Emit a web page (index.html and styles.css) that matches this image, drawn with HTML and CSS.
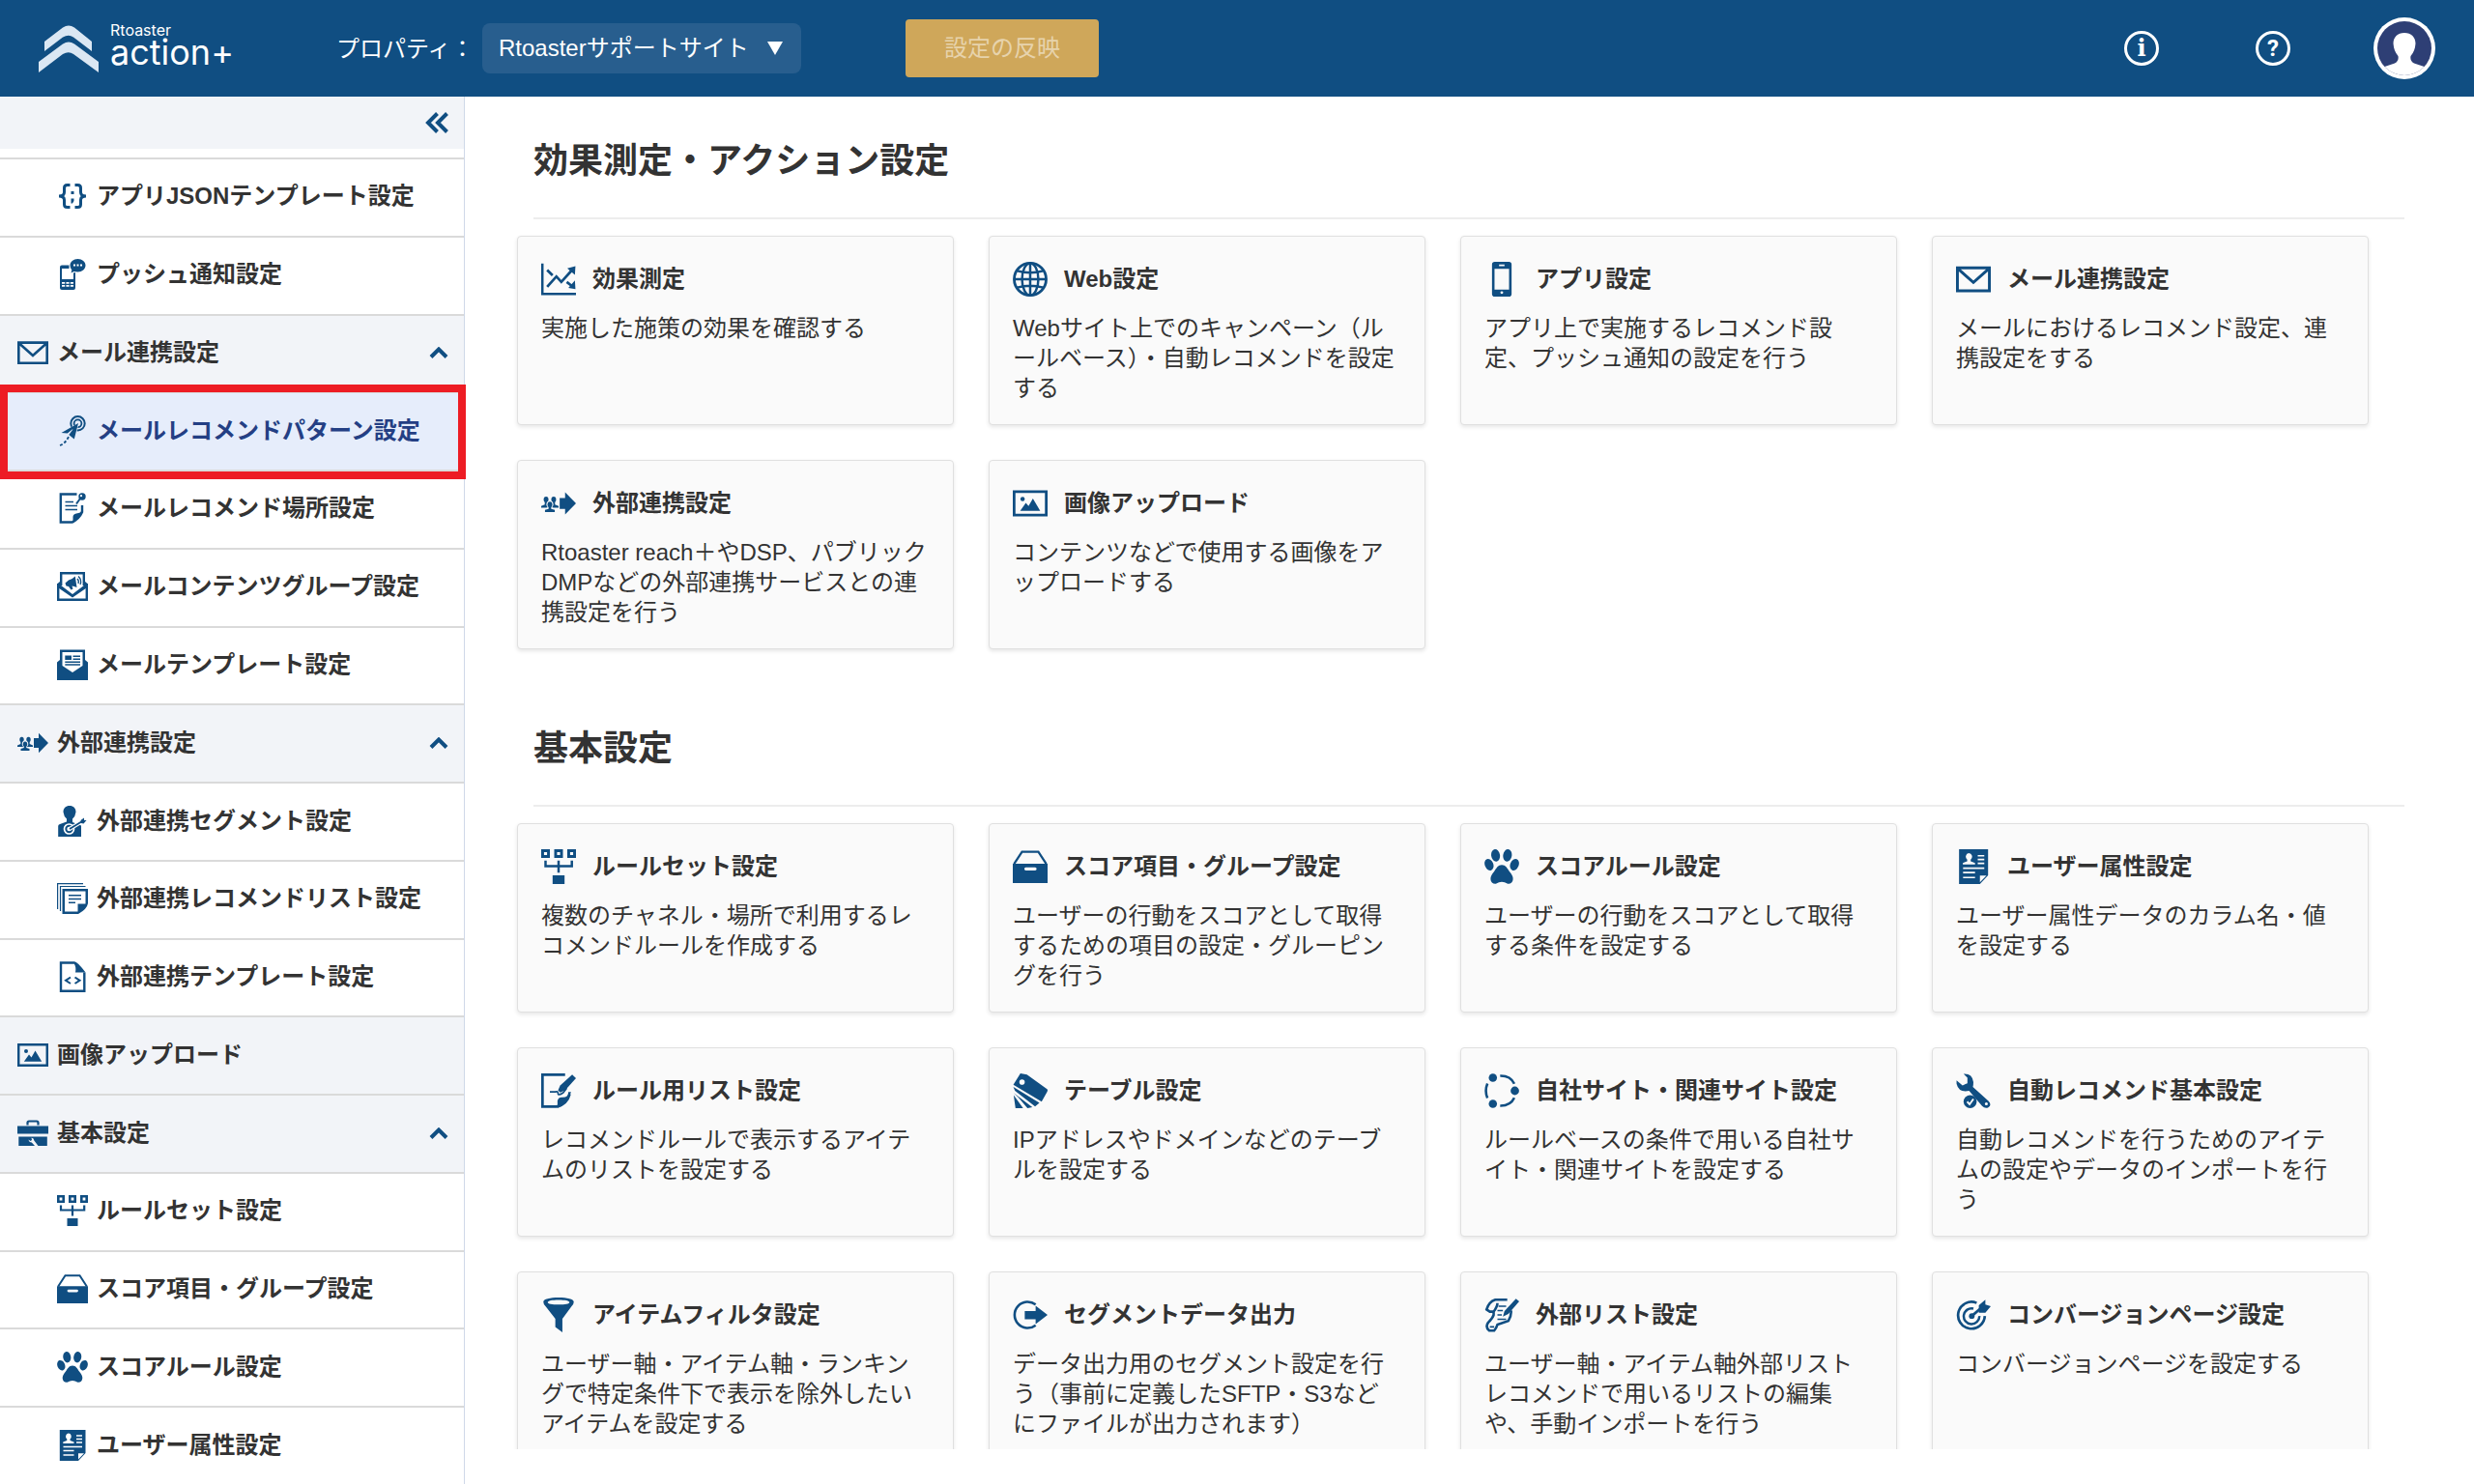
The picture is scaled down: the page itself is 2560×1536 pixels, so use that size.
FILE: index.html
```html
<!DOCTYPE html>
<html lang="ja">
<head>
    <meta charset="UTF-8">
    <meta name="viewport" content="width=device-width, initial-scale=1.0">
    <title>Rtoaster action+</title>
    <link rel="stylesheet" href="styles.css">
</head>
<body>

<!-- Icon sprite -->
<svg class="sprite" aria-hidden="true">
    <symbol id="i-json" viewBox="0 0 32 32">
        <g class="line" stroke-width="3">
            <path d="M13.500 4.500H10.500Q7.500 4.500 7.500 7.500V12Q7.500 16 2 16Q7.500 16 7.500 20V24.500Q7.500 27.500 10.500 27.500H13.500"/>
            <path d="M18.500 4.500H21.500Q24.500 4.500 24.500 7.500V12Q24.500 16 30 16Q24.500 16 24.500 20V24.500Q24.500 27.500 21.500 27.500H18.500"/>
        </g>
        <path d="M14.500 11h3v3h-3zM14.500 18.500h3v2.500l-1.500 2.500h-1.500z"/>
    </symbol>
    <symbol id="i-push" viewBox="0 0 32 32">
        <path fill-rule="evenodd" d="M5 6.500H12.500V10H5V21H17V14.500L19 14V30Q19 32 17 32H5Q3 32 3 30V8.500Q3 6.500 5 6.500zM5 24v1.800h3.200V24zM9.400 24v1.800h3.200V24zM13.800 24v1.800H17V24zM5 27v1.800h3.200V27zM9.400 27v1.800h3.200V27zM13.800 27v1.800H17V27z"/>
        <path d="M21.500 0C26 0 29.500 3 29.500 6.700S26 13.400 21.500 13.400Q19 13.400 17.500 13L14.500 14.600L15.300 11.500Q13.500 9.500 13.500 6.700C13.500 3 17 0 21.500 0z"/>
        <path class="cut" d="M17 5.600h2v2h-2zM20.500 5.600h2v2h-2zM24 5.600h2v2h-2z"/>
    </symbol>
    <symbol id="i-mail" viewBox="0 0 32 32">
        <path class="line" stroke-width="2.600" d="M1.300 5.600H30.700V26.700H1.300zM2 6.500L16 19L30 6.500"/>
    </symbol>
    <symbol id="i-pattern" viewBox="0 0 32 32">
        <circle class="line" stroke-width="2" cx="21.500" cy="8.300" r="7.200"/>
        <circle class="line" stroke-width="1.800" cx="21.500" cy="8.300" r="3.900"/>
        <path class="cutline" stroke-width="1" d="M22 8.500L4.500 18L11.500 18.800L17.800 24.500z"/>
        <path d="M22 8L4.500 18L10.800 18.600L17.500 13L12.300 20L17.800 24.500z"/>
        <path class="line" stroke-width="1.800" stroke-dasharray="3 2" d="M3 31Q9 29 12.500 21"/>
    </symbol>
    <symbol id="i-place" viewBox="0 0 32 32">
        <path class="line" stroke-width="2.400" d="M20.500 1.500H3.800V30.500H15.500Q23 27 26 20V13"/>
        <path d="M27.200 19L16.500 32V25Q16.500 22 20 21.500Q25 21 25.500 18z"/>
        <circle cx="26" cy="4" r="3.700"/>
        <circle class="cut" cx="25" cy="3.200" r="1.100"/>
        <path class="line" stroke-width="2" d="M24 6L20 11.500"/>
        <path class="line" stroke-width="1.400" d="M8.500 9.500H17M8.500 13.500H21M8.500 17.500H21"/>
    </symbol>
    <symbol id="i-contents" viewBox="0 0 32 32">
        <path class="line" stroke-width="2.400" d="M1.200 13V29.700H30.800V13"/>
        <path d="M0 13.500L3.500 10.500V14.500L16 24L28.500 14.500V10.500L32 13.500V16.500L16 27.500L0 16.500z"/>
        <path class="line" stroke-width="2.400" d="M4.200 15V2.200H27.800V15"/>
        <path d="M8.500 12.500L12 9.500Q16 8.500 18.800 5.500L20.500 17Q17.500 15.500 15.500 15.500L16.500 18.500L14.500 19.500L12 16L9.500 15.500z"/>
        <path class="line" stroke-width="1.300" d="M21 8Q23 10 22 13M22 5.500Q26 9 24 14"/>
    </symbol>
    <symbol id="i-mailtemplate" viewBox="0 0 32 32">
        <path d="M3 .500H29V11L32 13.500V32H0V13.500L3 11z"/>
        <path class="cut" d="M5.500 3H26.500V17L16 24L5.500 17z"/>
        <path d="M8.300 6.500H15V11H8.300z"/>
        <path class="line" stroke-width="1.500" d="M16.500 7.300H24M16.500 10.300H24M8.300 13.300H24M8.300 16H24"/>
    </symbol>
    <symbol id="i-external" viewBox="0 0 32 32">
        <path d="M17 11H22V5.800L32 16L22 26.300V21H17z"/>
        <ellipse cx="4.500" cy="12.500" rx="2.200" ry="2.700"/>
        <ellipse cx="11.500" cy="12.500" rx="2.200" ry="2.700"/>
        <path d="M3.300 14.500H5.700V17L7 18L6 20H0V18.500L3.300 17zM12.700 14.500H10.300V17L9 18L10 20H16V18.500L12.700 17z"/>
        <path class="cut" d="M8 13.500a3.200 3.500 0 0 1 2 6.300l3 1.400v1H3v-1l3-1.400a3.200 3.500 0 0 1 2-6.300z"/>
        <ellipse cx="8" cy="17.200" rx="2.200" ry="2.700"/>
        <path d="M6.800 19H9.200V21L12.500 22V24H3.500V22L6.800 21z"/>
    </symbol>
    <symbol id="i-segment" viewBox="0 0 32 32">
        <path d="M13 0C17 0 19.500 2.500 19.500 6.500Q19 11 16 13.500V17L25 20.500V32H1.200V21Q1.200 19.500 3 19L10 16.500V13.500Q7 11 6.500 6.500C6.500 2.500 9 0 13 0z"/>
        <circle class="cutline" stroke-width="1.700" cx="12.500" cy="24" r="5"/>
        <circle class="cut" cx="12.500" cy="24" r="2.200"/>
        <path class="cutline" stroke-width="4" d="M13 24L27 15.500"/>
        <path class="line" stroke-width="1.800" d="M13 24L27 15.500"/>
        <path d="M24.500 15L28 12.500V15H30.500L27.500 18.500L25 18z"/>
    </symbol>
    <symbol id="i-reclist" viewBox="0 0 32 32">
        <path class="line" stroke-width="1.200" d="M.600 27V.600H27M3.500 29V3.500H29.500"/>
        <path d="M5.500 6H32V21Q31 27 22 32H5.500z"/>
        <path class="cut" d="M8 8.500H29.500V21.500H21.500V29.500H8z"/>
        <path class="line" stroke-width="1.500" d="M12 12.700H25M12 16.500H25M12 20.300H19"/>
    </symbol>
    <symbol id="i-exttemplate" viewBox="0 0 32 32">
        <path class="line" stroke-width="2.400" d="M18 1.500H4V30.700H28.300V11.500"/>
        <path d="M18 .300Q21 .300 29.500 11.500H19Q20 6 18 3z"/>
        <path class="line" stroke-width="2" d="M14 16.500L9 19.800L14 23M18.500 16.500L23.500 19.800L18.500 23"/>
    </symbol>
    <symbol id="i-image" viewBox="0 0 32 32">
        <path class="line" stroke-width="2.500" d="M1.200 5.300H30.800V26.800H1.200z"/>
        <circle cx="9" cy="12" r="2"/>
        <path d="M6.800 22.800L12 15.500L14.500 18.500L18.500 11.500L25.200 22.800z"/>
    </symbol>
    <symbol id="i-basic" viewBox="0 0 32 32">
        <path class="line" stroke-width="2.200" d="M10.500 7.500V5Q10.500 3.500 12 3.500H20Q21.500 3.500 21.500 5V7.500"/>
        <path d="M0 8.500H32V16.500H0zM1.300 19.500H30.800V29H1.300z"/>
        <path class="cut" d="M14.500 20.800Q17 20.500 17.300 23.500L21.500 29H18L14.800 25.500Q12 25.500 11.500 22.500L13.500 24L15 23z"/>
    </symbol>
    <symbol id="i-ruleset" viewBox="0 0 32 32">
        <path class="line" stroke-width="2.600" d="M1.300 1.300H6.700V6.700H1.300zM13.300 1.300H18.700V6.700H13.300zM25.300 1.300H30.700V6.700H25.300z"/>
        <path class="line" stroke-width="2.200" d="M4 10.500V15.500H28.200V10.500M16 10.500V21.500"/>
        <path d="M10.500 24H21.500V32H10.500z"/>
    </symbol>
    <symbol id="i-score" viewBox="0 0 32 32">
        <path class="line" stroke-width="2" d="M1.200 13.500L8.500 2.300H23.500L30.800 13.500"/>
        <path fill-rule="evenodd" d="M0 13.300H32V31H0zM12 16.700a1.300 1.300 0 0 0 0 2.800h8.500a1.300 1.300 0 0 0 0-2.800z"/>
    </symbol>
    <symbol id="i-paw" viewBox="0 0 32 32">
        <ellipse cx="10.300" cy="5.700" rx="4" ry="5.700" transform="rotate(-8 10.300 5.700)"/>
        <ellipse cx="21.200" cy="5.700" rx="4" ry="5.700" transform="rotate(8 21.200 5.700)"/>
        <ellipse cx="4.300" cy="14.200" rx="3.900" ry="5.500" transform="rotate(-22 4.300 14.200)"/>
        <ellipse cx="27.700" cy="14.200" rx="3.900" ry="5.500" transform="rotate(22 27.700 14.200)"/>
        <path d="M16 14.500C19.500 14.500 21 17.500 23 20.500Q26.500 24.500 26.300 27.500C26.200 30.500 24 32 21.500 31.700Q18.500 30 16 30T10.500 31.700C8 32 5.800 30.500 5.700 27.500Q5.500 24.500 9 20.500C11 17.500 12.500 14.500 16 14.500z"/>
    </symbol>
    <symbol id="i-user" viewBox="0 0 32 32">
        <path d="M2.800 0H29.500V24L22 32H2.800z"/>
        <path class="cut" d="M11.800 3.500a3 3.300 0 0 1 1.700 6V11l4 1.600V14H6.300v-1.400l4-1.600V9.500a3 3.300 0 0 1 1.500-6zM28 24.300L22 30.500V24.300z"/>
        <path class="cutline" stroke-width="1.500" d="M20 6H26M20 9.500H26M20 13H26M6.500 17.500H26M6.500 21.500H17.500M6.500 26H17.500"/>
    </symbol>
    <symbol id="i-chart" viewBox="0 0 32 32">
        <path class="line" stroke-width="2.200" d="M1.100 1.500V29.500H32"/>
        <path class="line" stroke-width="2.400" d="M5.500 23L14 13.500L18.500 18.500L28 8M5.500 7.500L10.500 12.500M23.500 18.500L28 22"/>
        <path d="M31.500 4L31 12L24 6zM31.500 25L31 17L25 24z"/>
    </symbol>
    <symbol id="i-web" viewBox="0 0 32 32">
        <circle class="line" stroke-width="2.500" cx="16" cy="16" r="14.700"/>
        <ellipse class="line" stroke-width="2.200" cx="16" cy="16" rx="7.500" ry="14.700"/>
        <path class="line" stroke-width="2.200" d="M16 1V31M1 16H31M4 8.300Q16 11.500 28 8.300M4 23.700Q16 20.500 28 23.700"/>
    </symbol>
    <symbol id="i-app" viewBox="0 0 32 32">
        <path fill-rule="evenodd" d="M9.500 0H22.500Q25 0 25 2.500V29.500Q25 32 22.500 32H9.500Q7 32 7 29.500V2.500Q7 0 9.500 0zM9.300 6.500V25.500H22.700V6.500zM13.500 2.500V4H18.500V2.500zM14.700 28.300a1.300 1.300 0 0 0 2.600 0a1.300 1.300 0 0 0-2.600 0z"/>
    </symbol>
    <symbol id="i-rulelist" viewBox="0 0 32 32">
        <path class="line" stroke-width="2.400" d="M22 1.200H1.200V30.500H14.500Q24 28 26.200 19"/>
        <path d="M27.500 17L25.500 22Q22 30 15 32V25Q16 21.500 20 22Q25 22 25 17z"/>
        <path d="M28.500 1L32 4.500L22 15.500L17.500 17.500L15.500 15.500L17.500 11z"/>
        <path class="line" stroke-width="1.500" d="M8 17H13Q15.500 16 15.500 18.500T20.500 17.500L23.500 13.500"/>
    </symbol>
    <symbol id="i-table" viewBox="0 0 32 32">
        <path fill-rule="evenodd" d="M7 0L13 1L31.500 14.500Q32.500 15.500 31.500 17L26.500 26L.500 10.500zM6 8a2.500 2.500 0 1 0 5 0a2.500 2.500 0 1 0-5 0z"/>
        <path d="M.500 12.500L24.500 27L20.500 30.500L2 16zM.800 18L18 31L13.500 32L5 22zM.800 20L9.500 32H2.500z"/>
    </symbol>
    <symbol id="i-site" viewBox="0 0 32 32">
        <circle cx="7.800" cy="4" r="3.800"/>
        <circle cx="28" cy="16" r="3.900"/>
        <circle cx="7.800" cy="28" r="3.800"/>
        <path class="line" stroke-width="2.300" d="M14.500 2.200Q24 2 27.500 9.500M14.500 29.800Q24 30 27.500 22.500M2.800 9.300Q0 16 2.800 22.700"/>
    </symbol>
    <symbol id="i-auto" viewBox="0 0 32 32">
        <path fill-rule="evenodd" d="M7 .500Q15 0 16 8Q16 10.500 15.500 12.500L30 25.500Q33 29 30 31Q27 33 24 30L12 16Q2.500 18 .500 9.500V6.500L6 11L10.500 9L10.500 4zM26.500 28a1.400 1.400 0 1 0 2.800 0a1.400 1.400 0 1 0-2.800 0z"/>
        <circle cx="13" cy="26" r="6"/>
        <path class="cutline" stroke-width="1.700" d="M10.300 26L12.500 28.500L16 23.500"/>
    </symbol>
    <symbol id="i-filter" viewBox="0 0 32 32">
        <path d="M2 4C2 1.500 8 0 16 0S30 1.500 30 4Q30 6 28 8L19.500 19.500V32L13 27V19.500L4 8Q2 6 2 4z"/>
        <path class="cut" d="M6 4.500C6 3 10 2.300 16 2.300S26 3 26 4.500S22 6.500 16 6.500S6 6 6 4.500z"/>
    </symbol>
    <symbol id="i-output" viewBox="0 0 32 32">
        <path class="line" stroke-width="2.300" d="M21 6.500A12 12 0 1 0 21 25.500"/>
        <path d="M11 12.500H21V7.500L32 16L21 24.500V20H11z"/>
    </symbol>
    <symbol id="i-extlist" viewBox="0 0 32 32">
        <path class="line" stroke-width="2.300" d="M21 2H10Q4 4 2 11L5 13H8.500V16Q7.500 19 3.500 23Q.500 27 4.500 30.500H9Q11 28 12 25L22 21.500Q25 17 24.500 12M8.500 13Q12 8 12 5"/>
        <path d="M29 1L32 3.500L22 15L17 17.500L18.500 12.500z"/>
        <path class="line" stroke-width="1.500" d="M13 8H20M12 12H17M12 16H16M12 20H20M5 27H9"/>
    </symbol>
    <symbol id="i-conversion" viewBox="0 0 32 32">
        <path class="line" stroke-width="2.400" d="M19 5A12.300 12.300 0 1 0 26.500 17"/>
        <path class="line" stroke-width="2.200" d="M16 10.200A7.200 7.200 0 1 0 21.500 17"/>
        <circle cx="14.500" cy="17" r="2.600"/>
        <path class="line" stroke-width="2.400" d="M14.500 17L25 8"/>
        <path d="M21 7L27 2V6.500L32 8L27 14H21z"/>
    </symbol>
</svg>

<header class="header">
    <a class="logo" href="#" aria-label="Rtoaster action+">
        <svg class="logo-mark" viewBox="0 0 62 49">
            <path d="M6 17L25 2.500Q31 -1.500 37 2.500L55 17V27L36 12.500Q31 9 25 12.500L6 27z"/>
            <path d="M0 38L25 19.500Q31 15.500 37 19.500L62 38V49L36 30Q31 26.500 25 30L0 49z"/>
        </svg>
        <span class="logo-text">
            <span class="logo-small">Rtoaster</span>
            <span class="logo-large">action+</span>
        </span>
    </a>
    <label class="property-label" for="property">プロパティ：</label>
    <select class="property-select" id="property">
        <option>Rtoasterサポートサイト</option>
    </select>
    <button class="apply-btn" type="button">設定の反映</button>
    <div class="header-icons">
        <button class="icon-btn" type="button" aria-label="Info">
            <svg viewBox="0 0 38 38"><circle cx="19" cy="19" r="16.500"/><text class="slab" x="19" y="27">i</text></svg>
        </button>
        <button class="icon-btn" type="button" aria-label="Help">
            <svg viewBox="0 0 38 38"><circle cx="19" cy="19" r="16.500"/><text x="19" y="27">?</text></svg>
        </button>
        <button class="avatar" type="button" aria-label="Account">
            <svg viewBox="0 0 64 64">
                <circle class="ring" cx="32" cy="32" r="32"/>
                <circle class="back" cx="32" cy="32" r="28"/>
                <path class="ring" d="M32 16C39 16 43.500 20.500 43.500 27Q43 35 38.500 40Q37.500 45 42 47.500L52.500 51A28 28 0 0 1 11.500 51L22 47.500Q26.500 45 25.500 40Q21 35 20.500 27C20.500 20.500 25 16 32 16z"/>
            </svg>
        </button>
    </div>
</header>

<div class="layout">
    <aside class="sidebar">
        <div class="sidebar-top">
            <button class="collapse-btn" type="button" aria-label="Collapse">
                <svg viewBox="0 0 24 22"><path d="M12.500 1.500L3 11L12.500 20.500M22.500 1.500L13 11L22.500 20.500"/></svg>
            </button>
        </div>
        <nav class="menu">
            <a class="menu-item" href="#"><svg class="icon"><use href="#i-json"/></svg>アプリJSONテンプレート設定</a>
            <a class="menu-item" href="#"><svg class="icon"><use href="#i-push"/></svg>プッシュ通知設定</a>
            <a class="menu-item group" href="#"><svg class="icon"><use href="#i-mail"/></svg>メール連携設定<svg class="chevron" viewBox="0 0 20 12"><path d="M2 10.500L10 2.500L18 10.500"/></svg></a>
            <a class="menu-item active" href="#"><svg class="icon"><use href="#i-pattern"/></svg>メールレコメンドパターン設定</a>
            <a class="menu-item" href="#"><svg class="icon"><use href="#i-place"/></svg>メールレコメンド場所設定</a>
            <a class="menu-item" href="#"><svg class="icon"><use href="#i-contents"/></svg>メールコンテンツグループ設定</a>
            <a class="menu-item" href="#"><svg class="icon"><use href="#i-mailtemplate"/></svg>メールテンプレート設定</a>
            <a class="menu-item group" href="#"><svg class="icon"><use href="#i-external"/></svg>外部連携設定<svg class="chevron" viewBox="0 0 20 12"><path d="M2 10.500L10 2.500L18 10.500"/></svg></a>
            <a class="menu-item" href="#"><svg class="icon"><use href="#i-segment"/></svg>外部連携セグメント設定</a>
            <a class="menu-item" href="#"><svg class="icon"><use href="#i-reclist"/></svg>外部連携レコメンドリスト設定</a>
            <a class="menu-item" href="#"><svg class="icon"><use href="#i-exttemplate"/></svg>外部連携テンプレート設定</a>
            <a class="menu-item group" href="#"><svg class="icon"><use href="#i-image"/></svg>画像アップロード</a>
            <a class="menu-item group" href="#"><svg class="icon"><use href="#i-basic"/></svg>基本設定<svg class="chevron" viewBox="0 0 20 12"><path d="M2 10.500L10 2.500L18 10.500"/></svg></a>
            <a class="menu-item" href="#"><svg class="icon"><use href="#i-ruleset"/></svg>ルールセット設定</a>
            <a class="menu-item" href="#"><svg class="icon"><use href="#i-score"/></svg>スコア項目・グループ設定</a>
            <a class="menu-item" href="#"><svg class="icon"><use href="#i-paw"/></svg>スコアルール設定</a>
            <a class="menu-item" href="#"><svg class="icon"><use href="#i-user"/></svg>ユーザー属性設定</a>
        </nav>
    </aside>

    <main class="main">
        <section class="section">
            <h2>効果測定・アクション設定</h2>
            <div class="cards">
                <a class="card" href="#">
                    <h3><svg class="icon"><use href="#i-chart"/></svg>効果測定</h3>
                    <p>実施した施策の効果を確認する</p>
                </a>
                <a class="card" href="#">
                    <h3><svg class="icon"><use href="#i-web"/></svg>Web設定</h3>
                    <p>Webサイト上でのキャンペーン（ルールベース）・自動レコメンドを設定する</p>
                </a>
                <a class="card" href="#">
                    <h3><svg class="icon"><use href="#i-app"/></svg>アプリ設定</h3>
                    <p>アプリ上で実施するレコメンド設定、プッシュ通知の設定を行う</p>
                </a>
                <a class="card" href="#">
                    <h3><svg class="icon"><use href="#i-mail"/></svg>メール連携設定</h3>
                    <p>メールにおけるレコメンド設定、連携設定をする</p>
                </a>
                <a class="card" href="#">
                    <h3><svg class="icon"><use href="#i-external"/></svg>外部連携設定</h3>
                    <p>Rtoaster reach＋やDSP、パブリックDMPなどの外部連携サービスとの連携設定を行う</p>
                </a>
                <a class="card" href="#">
                    <h3><svg class="icon"><use href="#i-image"/></svg>画像アップロード</h3>
                    <p>コンテンツなどで使用する画像をアップロードする</p>
                </a>
            </div>
        </section>

        <section class="section">
            <h2>基本設定</h2>
            <div class="cards">
                <a class="card" href="#">
                    <h3><svg class="icon"><use href="#i-ruleset"/></svg>ルールセット設定</h3>
                    <p>複数のチャネル・場所で利用するレコメンドルールを作成する</p>
                </a>
                <a class="card" href="#">
                    <h3><svg class="icon"><use href="#i-score"/></svg>スコア項目・グループ設定</h3>
                    <p>ユーザーの行動をスコアとして取得するための項目の設定・グルーピングを行う</p>
                </a>
                <a class="card" href="#">
                    <h3><svg class="icon"><use href="#i-paw"/></svg>スコアルール設定</h3>
                    <p>ユーザーの行動をスコアとして取得する条件を設定する</p>
                </a>
                <a class="card" href="#">
                    <h3><svg class="icon"><use href="#i-user"/></svg>ユーザー属性設定</h3>
                    <p>ユーザー属性データのカラム名・値を設定する</p>
                </a>
                <a class="card" href="#">
                    <h3><svg class="icon"><use href="#i-rulelist"/></svg>ルール用リスト設定</h3>
                    <p>レコメンドルールで表示するアイテムのリストを設定する</p>
                </a>
                <a class="card" href="#">
                    <h3><svg class="icon"><use href="#i-table"/></svg>テーブル設定</h3>
                    <p>IPアドレスやドメインなどのテーブルを設定する</p>
                </a>
                <a class="card" href="#">
                    <h3><svg class="icon"><use href="#i-site"/></svg>自社サイト・関連サイト設定</h3>
                    <p>ルールベースの条件で用いる自社サイト・関連サイトを設定する</p>
                </a>
                <a class="card" href="#">
                    <h3><svg class="icon"><use href="#i-auto"/></svg>自動レコメンド基本設定</h3>
                    <p>自動レコメンドを行うためのアイテムの設定やデータのインポートを行う</p>
                </a>
                <a class="card" href="#">
                    <h3><svg class="icon"><use href="#i-filter"/></svg>アイテムフィルタ設定</h3>
                    <p>ユーザー軸・アイテム軸・ランキングで特定条件下で表示を除外したいアイテムを設定する</p>
                </a>
                <a class="card" href="#">
                    <h3><svg class="icon"><use href="#i-output"/></svg>セグメントデータ出力</h3>
                    <p>データ出力用のセグメント設定を行う（事前に定義したSFTP・S3などにファイルが出力されます）</p>
                </a>
                <a class="card" href="#">
                    <h3><svg class="icon"><use href="#i-extlist"/></svg>外部リスト設定</h3>
                    <p>ユーザー軸・アイテム軸外部リストレコメンドで用いるリストの編集や、手動インポートを行う</p>
                </a>
                <a class="card" href="#">
                    <h3><svg class="icon"><use href="#i-conversion"/></svg>コンバージョンページ設定</h3>
                    <p>コンバージョンページを設定する</p>
                </a>
            </div>
        </section>
    </main>
</div>

</body>
</html>
```
FILE: styles.css
```css
* {
    margin: 0;
    padding: 0;
    box-sizing: border-box;
}

body {
    font-family: "Liberation Sans", "Noto Sans CJK JP", sans-serif;
    font-size: 24px;
    color: #333;
    background-color: #fff;
    height: 100vh;
    display: flex;
    flex-direction: column;
    overflow: hidden;
}

a {
    color: inherit;
    text-decoration: none;
}

button {
    font: inherit;
    border: none;
    background: none;
    cursor: pointer;
}

/* Icons */
.sprite {
    display: none;
}

.icon {
    width: 32px;
    height: 32px;
    flex: none;
    color: #104e82;
    fill: currentColor;
}

.line {
    fill: none;
    stroke: currentColor;
}

.cut {
    fill: var(--icon-bg, #fff);
}

.cutline {
    fill: none;
    stroke: var(--icon-bg, #fff);
}

/* Header */
.header {
    flex: none;
    height: 100px;
    padding: 0 40px;
    display: flex;
    align-items: center;
    background-color: #104e82;
    color: #fff;
}

.logo {
    display: flex;
    align-items: center;
    gap: 12px;
    width: 308px;
}

.logo-mark {
    width: 62px;
    height: 49px;
    fill: #dbe7f3;
}

.logo-text {
    display: flex;
    flex-direction: column;
    margin-bottom: 8px;
    font-family: Inter, sans-serif;
}

.logo-small {
    font-size: 16px;
    line-height: 16px;
}

.logo-large {
    font-size: 36px;
    line-height: 30px;
}

.property-label {
    width: 151px;
    padding-bottom: 4px;
}

.property-select {
    width: 330px;
    height: 52px;
    padding: 0 17px 2px;
    border: none;
    border-radius: 8px;
    appearance: none;
    font: inherit;
    color: #fff;
    background: #285e8e url("data:image/svg+xml,%3Csvg xmlns='http://www.w3.org/2000/svg' viewBox='0 0 16 14'%3E%3Cpath fill='white' d='M0 0H16L8 14z'/%3E%3C/svg%3E") no-repeat right 19px center / 16px 14px;
}

.apply-btn {
    width: 200px;
    height: 60px;
    margin-left: 108px;
    padding-bottom: 6px;
    border-radius: 4px;
    background-color: #cfa75a;
    color: #e7d3ac;
}

.header-icons {
    margin-left: auto;
    display: flex;
    align-items: center;
}

.icon-btn {
    width: 38px;
    height: 38px;
    margin-right: 98px;
}

.icon-btn + .icon-btn {
    margin-right: 85px;
}

.icon-btn svg,
.avatar svg {
    display: block;
}

.icon-btn circle {
    fill: none;
    stroke: #fff;
    stroke-width: 3;
}

.icon-btn text {
    fill: #fff;
    font-family: Roboto, sans-serif;
    font-size: 24px;
    font-weight: bold;
    text-anchor: middle;
}

.icon-btn .slab {
    font-family: "DejaVu Serif", serif;
}

.avatar {
    width: 64px;
    height: 64px;
}

.avatar .ring {
    fill: #fff;
}

.avatar .back {
    fill: #2e3f75;
}

/* Page layout */
.layout {
    flex: 1;
    min-height: 0;
    display: flex;
}

/* Sidebar */
.sidebar {
    flex: none;
    width: 481px;
    display: flex;
    flex-direction: column;
    border-right: 1px solid #cfd8e8;
}

.sidebar-top {
    height: 54px;
    margin-bottom: 9px;
    padding: 0 16px;
    display: flex;
    justify-content: flex-end;
    align-items: center;
    background-color: #f2f4f8;
}

.collapse-btn svg {
    display: block;
    width: 24px;
    height: 22px;
    fill: none;
    stroke: #104e82;
    stroke-width: 4;
}

.menu {
    flex: 1;
    display: flex;
    flex-direction: column;
}

.menu-item {
    flex: 1;
    display: flex;
    align-items: center;
    gap: 9px;
    padding: 0 16px 7px 59px;
    border-top: 2px solid #dadada;
    font-weight: bold;
    white-space: nowrap;
}

.menu-item .icon {
    margin-top: 5px;
}

.menu-item.group {
    --icon-bg: #f2f4f8;
    padding-left: 18px;
    background-color: #f2f4f8;
}

.menu-item.active {
    --icon-bg: #e6edfb;
    position: relative;
    background-color: #e6edfb;
    color: #243f84;
}

/* Red frame round the current item */
.menu-item.active::after {
    content: "";
    position: absolute;
    inset: -9px -2px -10px 0;
    border: 8px solid #ed1c24;
}

.chevron {
    width: 20px;
    height: 12px;
    margin-top: 6px;
    margin-left: auto;
    fill: none;
    stroke: #104e82;
    stroke-width: 4;
}

/* Main area */
.main {
    flex: 1;
    margin-bottom: 36px;
    padding: 0 72px 0 54px;
    overflow-y: auto;
    scrollbar-width: none;
}

.section {
    margin-bottom: 36px;
}

.section h2 {
    height: 127px;
    margin: 0 0 17px 17px;
    border-bottom: 2px solid #ededed;
    font-size: 36px;
    line-height: 134px;
}

.cards {
    display: grid;
    grid-template-columns: repeat(4, 1fr);
    gap: 36px;
    margin-right: 37px;
}

.card {
    --icon-bg: #fafafa;
    min-height: 196px;
    padding: 26px 24px 0;
    border: 1px solid #e0e0e0;
    border-radius: 4px;
    background-color: #fafafa;
    box-shadow: 0 2px 4px rgba(0, 0, 0, 0.1);
}

.card h3 {
    display: flex;
    align-items: center;
    gap: 17px;
    height: 30px;
    margin-bottom: 23px;
    font-size: 24px;
}

.card h3 .icon {
    width: 36px;
    height: 36px;
    margin-top: 6px;
}

.card p {
    line-height: 31px;
}
```
